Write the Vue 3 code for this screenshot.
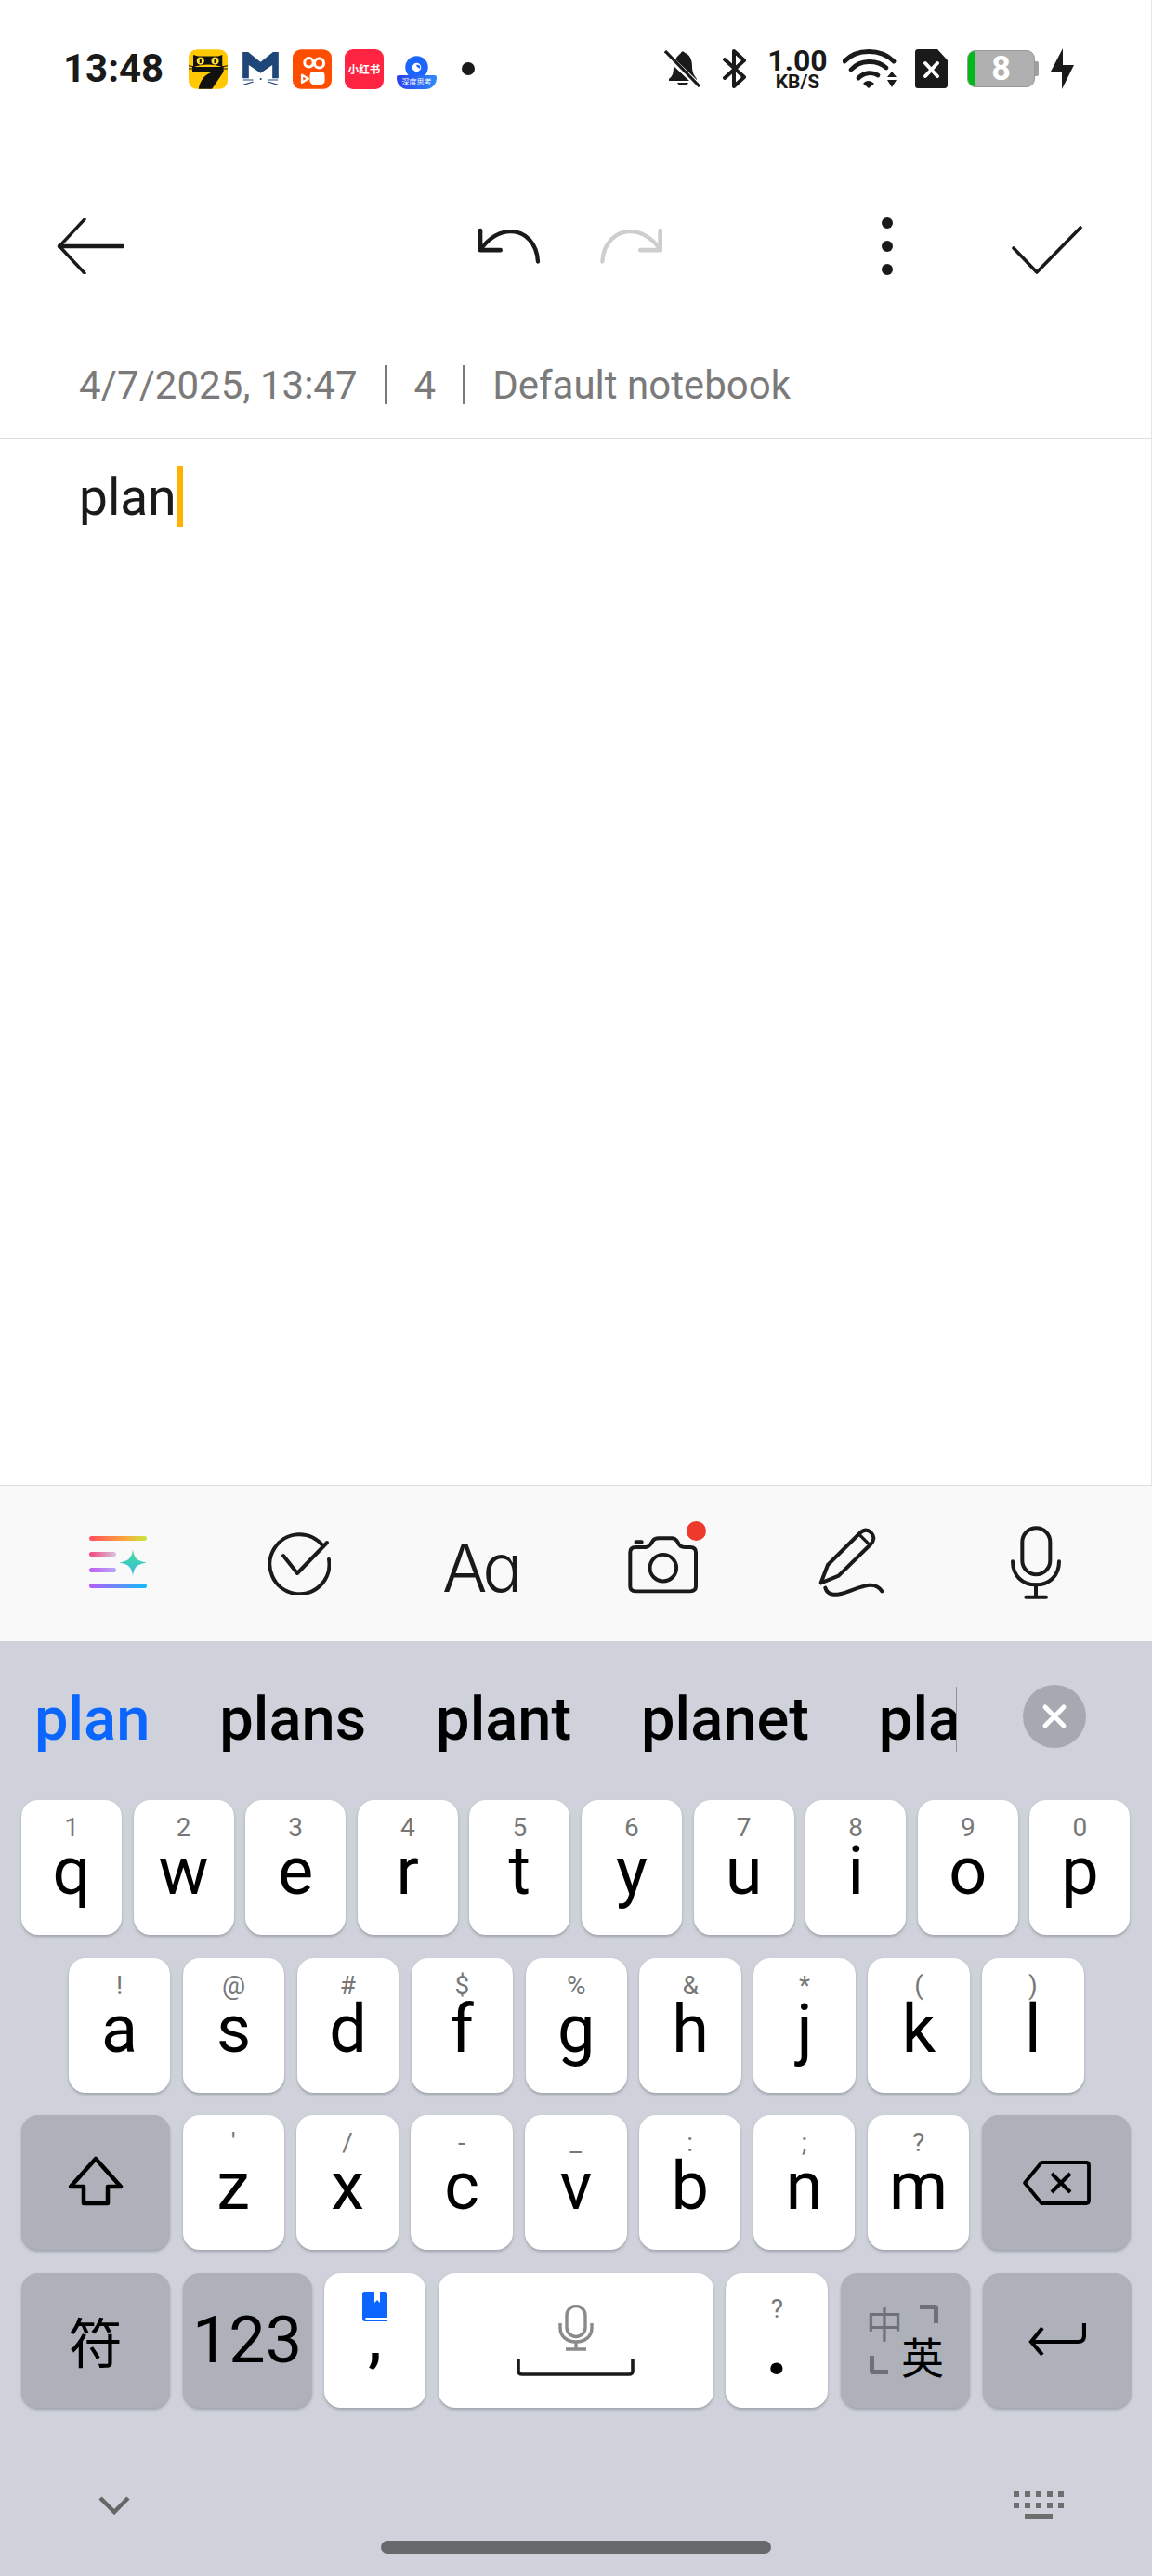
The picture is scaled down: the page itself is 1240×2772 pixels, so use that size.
<script setup>
// Keyboard rows: [letter, hint]
const row1 = [['q','1'],['w','2'],['e','3'],['r','4'],['t','5'],['y','6'],['u','7'],['i','8'],['o','9'],['p','0']]
const row2 = [['a','!'],['s','@'],['d','#'],['f','$'],['g','%'],['h','&'],['j','*'],['k','('],['l',')']]
const row3 = [['z',"'"],['x','/'],['c','-'],['v','_'],['b',':'],['n',';'],['m','?']]
const suggestions = ['plans', 'plant', 'planet', 'planning']
</script>

<template>
  <div class="phone">
    <div class="note">
      <!-- Status bar -->
      <div class="status">
        <span class="clock">13:48</span>
        <div class="apps">
          <svg class="app" width="42" height="43" viewBox="40 28 125 127">
            <rect x="40" y="28" width="125" height="127" rx="27" fill="#ffc800"/>
            <path d="M55 45L70 50H135L148 45V84C120 74 85 74 55 84Z" fill="#111"/>
            <circle cx="78" cy="65" r="12" fill="#ffe02e"/>
            <circle cx="125" cy="65" r="12" fill="#ffe02e"/>
            <path d="M78 58V72M125 58V72" stroke="#111" stroke-width="6"/>
            <path d="M40 80L62 84M165 80L143 84M40 90L60 90M165 90L145 90" stroke="#111" stroke-width="3"/>
            <path d="M52 84H152V100L115 155H72C76 130 90 110 112 102H52Z" fill="#111"/>
          </svg>
          <svg class="app mail" width="39" height="36" viewBox="212 40 116 108">
            <path d="M212 40H230L270 72L310 40H328V125H308V82L270 108L232 82V125H212Z" fill="#1f4678"/>
            <rect x="268" y="124" width="5" height="6" fill="#1f4678"/>
            <path d="M214 130L246 130M214 146L246 136M326 130L294 130M326 146L294 136" stroke="#1f4678" stroke-width="3.500"/>
          </svg>
          <svg class="app" width="42" height="43" viewBox="375 28 125 127">
            <rect x="375" y="28" width="125" height="127" rx="27" fill="#ff4d00"/>
            <circle cx="427" cy="70" r="14" fill="none" stroke="#fff" stroke-width="9"/>
            <circle cx="460" cy="72" r="15" fill="none" stroke="#fff" stroke-width="9"/>
            <path d="M405 110L425 122L405 134Z" fill="none" stroke="#fff" stroke-width="7" stroke-linejoin="round"/>
            <rect x="430" y="99" width="48" height="42" rx="13" fill="#fff"/>
          </svg>
          <div class="app red-app">小红书</div>
          <div class="app deep-app">
            <svg width="25" height="25" viewBox="0 0 25 25">
              <circle cx="12.500" cy="12.500" r="8.500" fill="none" stroke="#1a66ff" stroke-width="7.500"/>
              <path d="M12 10C15 9 17 11 16 14L13 12Z" fill="#1a66ff"/>
            </svg>
            <span class="deep-label">深度思考</span>
          </div>
        </div>
        <span class="dot"></span>

        <svg class="bell" width="40" height="40" viewBox="0 0 40 40">
          <path d="M5 31C9 28 10 25 10 17L27 33H5ZM12 10C14 6 17 4 18 3C18 1 22 1 22 3C27 4 30 10 30 17C30 24 32 27 35 31V32L12 10Z" fill="#1a1a1a"/>
          <path d="M14 35H26C25 39 15 39 14 35Z" fill="#1a1a1a"/>
          <path d="M1 1L38 39" stroke="#1a1a1a" stroke-width="3.200"/>
        </svg>
        <svg class="bt" width="25" height="42" viewBox="0 0 25 42">
          <path d="M2 11L23 30L12 40V2L23 12L2 31" fill="none" stroke="#1a1a1a" stroke-width="4" stroke-linejoin="round" stroke-linecap="round"/>
        </svg>
        <div class="speed">
          <span class="speed-num">1.00</span>
          <span class="speed-unit">KB/S</span>
        </div>
        <svg class="wifi" width="59" height="42" viewBox="0 0 59 42">
          <path d="M2 13C15 -1 41 -1 55 13" fill="none" stroke="#1a1a1a" stroke-width="4.800" stroke-linecap="round"/>
          <path d="M9 22C19 11 37 11 47 20" fill="none" stroke="#1a1a1a" stroke-width="4.800" stroke-linecap="round"/>
          <path d="M17 31C23 25 32 24 38 28" fill="none" stroke="#1a1a1a" stroke-width="4.800" stroke-linecap="round"/>
          <path d="M22 37C25 33 30 33 34 37L28 42Z" fill="#1a1a1a"/>
          <path d="M48 30L53 24L58 30ZM48 33L58 33L53 41Z" fill="#1a1a1a"/>
        </svg>
        <svg class="sim" width="35" height="42" viewBox="0 0 35 42">
          <path d="M3 0H24L35 12V39C35 41 33 42 32 42H3C1 42 0 41 0 39V3C0 1 1 0 3 0Z" fill="#1a1a1a"/>
          <path d="M11 15L24 29M24 15L11 29" stroke="#fff" stroke-width="4" stroke-linecap="round"/>
        </svg>
        <div class="battery">
          <div class="battery-body">
            <span class="battery-fill"></span>
            <span class="battery-num">8</span>
          </div>
          <span class="battery-nub"></span>
        </div>
        <svg class="bolt" width="25" height="44" viewBox="0 0 25 44">
          <path d="M13 0V18H25L12 44V25H0Z" fill="#1a1a1a"/>
        </svg>
      </div>

      <!-- Editor toolbar -->
      <div class="toolbar">
        <svg class="back" width="73" height="60" viewBox="0 0 73 60">
          <path d="M30 1L3 30L30 59" fill="none" stroke="#1a1a1a" stroke-width="3.400" stroke-linecap="round" stroke-linejoin="round"/>
          <path d="M3 30H71" stroke="#1a1a1a" stroke-width="4.600" stroke-linecap="round"/>
        </svg>
        <svg class="undo" width="70" height="42" viewBox="40 60 210 125">
          <path d="M52 72V135H117" fill="none" stroke="#1a1a1a" stroke-width="14" stroke-linecap="round" stroke-linejoin="round"/>
          <path d="M55 130C85 90 120 75 150 75C200 75 235 115 238 172" fill="none" stroke="#1a1a1a" stroke-width="13" stroke-linecap="round"/>
        </svg>
        <svg class="redo" width="70" height="42" viewBox="435 60 210 125">
          <path d="M632 72V135H568" fill="none" stroke="#cfcdcf" stroke-width="14" stroke-linecap="round" stroke-linejoin="round"/>
          <path d="M630 130C600 90 565 75 535 75C485 75 448 115 445 172" fill="none" stroke="#cfcdcf" stroke-width="13" stroke-linecap="round"/>
        </svg>
        <div class="kebab"><span></span><span></span><span></span></div>
        <svg class="done" width="76" height="52" viewBox="0 0 76 52">
          <path d="M2 24L27 50L74 2" fill="none" stroke="#1a1a1a" stroke-width="3.600" stroke-linecap="round" stroke-linejoin="round"/>
        </svg>
      </div>

      <!-- Note meta line -->
      <div class="meta">
        <span>4/7/2025, 13:47</span>
        <i class="sep"></i>
        <span>4</span>
        <i class="sep"></i>
        <span>Default notebook</span>
      </div>

      <div class="editor">
        <span class="typed">plan</span><i class="caret"></i>
      </div>
    </div>

    <!-- Formatting tools -->
    <div class="tools">
      <svg class="t-ai" width="62" height="56" viewBox="0 0 62 56">
        <defs>
          <linearGradient id="g1"><stop offset="0" stop-color="#ff4d5e"/><stop offset=".6" stop-color="#ffa53a"/><stop offset="1" stop-color="#c9e63a"/></linearGradient>
          <linearGradient id="g2"><stop offset="0" stop-color="#f2447f"/><stop offset="1" stop-color="#d6c4dc"/></linearGradient>
          <linearGradient id="g3"><stop offset="0" stop-color="#c05cf0"/><stop offset="1" stop-color="#b8a8f8"/></linearGradient>
          <linearGradient id="g4"><stop offset="0" stop-color="#b85cf8"/><stop offset="1" stop-color="#10bcf8"/></linearGradient>
          <linearGradient id="g5" x1="0" y1="0" x2="0" y2="1"><stop offset="0" stop-color="#4ee08c"/><stop offset="1" stop-color="#2cb8f0"/></linearGradient>
        </defs>
        <rect y="0" width="62" height="5" rx="2.500" fill="url(#g1)"/>
        <rect y="17" width="29" height="5" rx="2.500" fill="url(#g2)"/>
        <rect y="34" width="29" height="5" rx="2.500" fill="url(#g3)"/>
        <rect y="51" width="62" height="5" rx="2.500" fill="url(#g4)"/>
        <path d="M47 14C48 23 51 27 62 28.500C51 30 48 34 47 43C46 34 43 30 32 28.500C43 27 46 23 47 14Z" fill="url(#g5)"/>
      </svg>
      <svg class="t-check" width="68" height="68" viewBox="0 0 68 68">
        <path d="M60 16A32 32 0 1 0 66 30" fill="none" stroke="#1a1a1a" stroke-width="4" stroke-linecap="round"/>
        <path d="M17 26L32 45L64 12" fill="none" stroke="#1a1a1a" stroke-width="4" stroke-linecap="round" stroke-linejoin="round"/>
      </svg>
      <span class="t-aa">Aa</span>
      <div class="t-cam">
        <svg width="78" height="62" viewBox="645 70 235 185">
          <path d="M672 105H705C718 105 722 95 728 85C732 78 738 76 748 76H790C800 76 805 80 810 90C814 100 820 105 832 105H850C862 105 868 112 868 122V232C868 242 862 248 850 248H672C660 248 655 242 655 232V122C655 112 660 105 672 105Z" fill="none" stroke="#1a1a1a" stroke-width="12" stroke-linejoin="round"/>
          <circle cx="762" cy="172" r="43" fill="none" stroke="#1a1a1a" stroke-width="12"/>
          <rect x="668" y="82" width="30" height="13" rx="5" fill="#1a1a1a"/>
        </svg>
        <span class="badge"></span>
      </div>
      <svg class="t-pen" width="70" height="74" viewBox="60 40 210 222">
        <path d="M68 218L90 160L193 58C205 46 218 44 230 56C242 68 240 82 228 94L125 195Z" fill="none" stroke="#1a1a1a" stroke-width="12" stroke-linejoin="round"/>
        <path d="M192 62L222 92" stroke="#1a1a1a" stroke-width="10"/>
        <path d="M82 234C90 262 120 258 150 248C190 235 240 205 265 245" fill="none" stroke="#1a1a1a" stroke-width="12" stroke-linecap="round"/>
      </svg>
      <svg class="t-mic" width="55" height="80" viewBox="675 35 165 240">
        <rect x="715" y="42" width="90" height="150" rx="45" fill="none" stroke="#1a1a1a" stroke-width="12"/>
        <path d="M684 150C684 195 715 225 759 225C803 225 834 195 834 150" fill="none" stroke="#1a1a1a" stroke-width="12" stroke-linecap="round"/>
        <path d="M759 225V265M727 265H792" fill="none" stroke="#1a1a1a" stroke-width="12" stroke-linecap="round"/>
      </svg>
    </div>

    <!-- Keyboard -->
    <div class="keyboard">
      <div class="suggest">
        <div class="strip">
          <span class="word first">plan</span>
          <span v-for="w in suggestions" :key="w" class="word">{{ w }}</span>
        </div>
        <div class="close">
          <svg width="28" height="28" viewBox="0 0 28 28">
            <path d="M4 4L24 24M24 4L4 24" stroke="#fff" stroke-width="5" stroke-linecap="round"/>
          </svg>
        </div>
      </div>

      <div class="rows">
        <div class="row r1">
          <div v-for="k in row1" :key="k[0]" class="key">
            <span class="hint">{{ k[1] }}</span>
            <span class="letter">{{ k[0] }}</span>
          </div>
        </div>
        <div class="row r2">
          <div v-for="k in row2" :key="k[0]" class="key">
            <span class="hint">{{ k[1] }}</span>
            <span class="letter">{{ k[0] }}</span>
          </div>
        </div>
        <div class="row r3">
          <div class="key fn wide">
            <svg class="shift" width="60" height="54" viewBox="0 0 60 54">
              <path d="M30 3L57 33H43V51H17V33H3Z" fill="none" stroke="#000" stroke-width="4.500" stroke-linejoin="round"/>
            </svg>
          </div>
          <div v-for="k in row3" :key="k[0]" class="key">
            <span class="hint">{{ k[1] }}</span>
            <span class="letter">{{ k[0] }}</span>
          </div>
          <div class="key fn wide">
            <svg width="74" height="48" viewBox="0 0 74 48">
              <path d="M21 2H69C71 2 72 3 72 5V43C72 45 71 46 69 46H21L3 24Z" fill="none" stroke="#000" stroke-width="3.800" stroke-linejoin="round"/>
              <path d="M32 14L52 34M52 14L32 34" stroke="#000" stroke-width="4"/>
            </svg>
          </div>
        </div>
        <div class="row r4">
          <div class="key fn wide sym">符</div>
          <div class="key fn num">123</div>
          <div class="key comma">
            <svg width="27" height="32" viewBox="0 0 27 32">
              <path d="M2 0H13V12L16 9L19 12V0H25C26 0 27 1 27 2V28H4C3 28 3 30 4 30H27V32H3C1 32 0 31 0 29V2C0 1 1 0 2 0Z" fill="#0a66ff"/>
            </svg>
            <span class="letter comma-mark">,</span>
          </div>
          <div class="key space">
            <svg class="sp-mic" width="38" height="50" viewBox="0 0 38 50">
              <rect x="9" y="1.500" width="20" height="33" rx="10" fill="none" stroke="#8a8a8a" stroke-width="3.400"/>
              <path d="M2 20V25C2 34 9 40 19 40C29 40 36 34 36 25V20" fill="none" stroke="#8a8a8a" stroke-width="3.400"/>
              <path d="M19 40V48M8 48H30" stroke="#8a8a8a" stroke-width="3.400"/>
            </svg>
            <svg class="sp-bar" width="127" height="18" viewBox="0 0 127 18">
              <path d="M2 0V12C2 15 3 16 6 16H121C124 16 125 15 125 12V0" fill="none" stroke="#1a1a1a" stroke-width="3.600"/>
            </svg>
          </div>
          <div class="key period">
            <span class="hint">?</span>
            <span class="letter period-mark">.</span>
          </div>
          <div class="key fn lang">
            <span class="zh">中</span>
            <span class="en">英</span>
            <i class="corner tr"></i>
            <i class="corner bl"></i>
          </div>
          <div class="key fn wide">
            <svg width="62" height="36" viewBox="0 0 62 36">
              <path d="M60 0V13C60 18 58 20 53 20H3M15 5L3 20L15 34" fill="none" stroke="#000" stroke-width="4.200"/>
            </svg>
          </div>
        </div>
      </div>

      <div class="foot">
        <svg width="34" height="20" viewBox="0 0 34 20">
          <path d="M2 2L17 17L32 2" fill="none" stroke="#666" stroke-width="4.500"/>
        </svg>
        <svg width="54" height="30" viewBox="0 0 54 30" fill="#6e6e6e">
          <rect x="0" y="0" width="6" height="6"/><rect x="12" y="0" width="6" height="6"/><rect x="24" y="0" width="6" height="6"/><rect x="36" y="0" width="6" height="6"/><rect x="48" y="0" width="6" height="6"/>
          <rect x="0" y="12" width="6" height="6"/><rect x="12" y="12" width="6" height="6"/><rect x="24" y="12" width="6" height="6"/><rect x="36" y="12" width="6" height="6"/><rect x="48" y="12" width="6" height="6"/>
          <rect x="12" y="24" width="30" height="6"/>
        </svg>
      </div>
      <div class="home-bar"></div>
    </div>
  </div>
</template>

<style>
body {
  background: #fff;
}
</style>

<style scoped>
.phone {
  width: 1240px;
  height: 2772px;
  display: flex;
  flex-direction: column;
  overflow: hidden;
  font-family: Roboto, 'Noto Sans CJK SC', sans-serif;
  background: #fff;
}

.note {
  flex: 1;
  display: flex;
  flex-direction: column;
  border-right: 1px solid #e6e6e6;
}

/* status bar */
.status {
  height: 148px;
  display: flex;
  align-items: center;
  padding-left: 68px;
  color: #1a1a1a;
}
.clock {
  font-size: 42px;
  font-weight: 700;
  width: 135px;
  line-height: 42px;
}
.apps {
  display: flex;
  align-items: center;
  gap: 14px;
}
.app {
  flex: none;
}
.mail {
  margin: 0 1px 0 2px;
}
.red-app {
  width: 42px;
  height: 43px;
  border-radius: 9px;
  background: #ff2442;
  color: #fff;
  font-size: 11.500px;
  font-weight: 700;
  line-height: 44px;
  text-align: center;
  white-space: nowrap;
}
.deep-app {
  width: 43px;
  height: 43px;
  padding-top: 7px;
  box-sizing: border-box;
  display: flex;
  flex-direction: column;
  align-items: center;
}
.deep-app svg {
  flex: none;
}
.deep-label {
  flex: none;
  width: 43px;
  height: 15px;
  margin-top: -4px;
  position: relative;
  border-radius: 2px 2px 12px 12px;
  background: linear-gradient(90deg, #2a3ff0, #2f8cf7);
  color: #fff;
  font-size: 8px;
  line-height: 15px;
  text-align: center;
  white-space: nowrap;
}
.dot {
  width: 14px;
  height: 14px;
  border-radius: 50%;
  background: #1a1a1a;
  margin-left: 27px;
}
.bell {
  margin-left: 204px;
}
.bt {
  margin-left: 23px;
}
.speed {
  margin-left: 23px;
  width: 65px;
  display: flex;
  flex-direction: column;
  align-items: center;
  font-weight: 700;
}
.speed-num {
  font-size: 32px;
  line-height: 27px;
}
.speed-unit {
  font-size: 21px;
  line-height: 18px;
}
.wifi {
  margin-left: 16px;
}
.sim {
  margin-left: 19px;
}
.battery {
  margin-left: 21px;
  display: flex;
  align-items: center;
}
.battery-body {
  width: 73px;
  height: 40px;
  box-sizing: border-box;
  border: 1px solid #999;
  border-radius: 9px;
  background: #b0b0b0;
  display: flex;
  align-items: center;
  justify-content: center;
  overflow: hidden;
  position: relative;
}
.battery-fill {
  position: absolute;
  left: 0;
  top: 0;
  bottom: 0;
  width: 7px;
  background: #00b81c;
}
.battery-num {
  color: #fff;
  font-size: 36px;
  font-weight: 700;
  line-height: 40px;
}
.battery-nub {
  width: 4px;
  height: 16px;
  border-radius: 0 2px 2px 0;
  background: #a0a0a0;
}
.bolt {
  margin-left: 13px;
}

/* editor toolbar */
.toolbar {
  height: 234px;
  display: flex;
  align-items: center;
  padding-left: 61px;
}
.undo {
  margin-left: 379px;
}
.redo {
  margin-left: 62px;
}
.kebab {
  margin-left: 234px;
  height: 62px;
  display: flex;
  flex-direction: column;
  justify-content: space-between;
}
.kebab span {
  width: 12px;
  height: 12px;
  border-radius: 50%;
  background: #1a1a1a;
}
.done {
  margin-left: 128px;
  margin-top: 8px;
}

/* meta */
.meta {
  height: 90px;
  box-sizing: border-box;
  border-bottom: 1px solid #dedede;
  padding-left: 85px;
  padding-bottom: 25px;
  display: flex;
  align-items: center;
  gap: 29px;
  color: #7a7a7a;
  font-size: 42px;
}
.sep {
  width: 3px;
  height: 42px;
  background: #7a7a7a;
}

.editor {
  flex: 1;
  padding: 29px 0 0 85px;
  display: flex;
  align-items: flex-start;
  color: #1a1a1a;
  font-size: 55px;
}
.typed {
  line-height: 68px;
}
.caret {
  width: 7px;
  height: 66px;
  background: #ffb300;
}

/* tools */
.tools {
  height: 168px;
  box-sizing: border-box;
  border-top: 1px solid #dedede;
  background: #f9f9f9;
  display: flex;
  align-items: flex-start;
  padding-left: 96px;
  color: #1a1a1a;
}
.t-ai {
  margin-top: 54px;
}
.t-check {
  margin-top: 49px;
  margin-left: 130px;
}
.t-aa {
  width: 80px;
  margin-left: 120px;
  margin-top: 43px;
  font-family: Inter, Roboto, sans-serif;
  font-feature-settings: 'cv11';
  font-size: 72px;
  font-weight: 300;
  line-height: 90px;
  letter-spacing: -5px;
}
.t-cam {
  margin-left: 119px;
  margin-top: 54px;
  position: relative;
  height: 62px;
}
.badge {
  position: absolute;
  top: -16px;
  left: 64px;
  width: 21px;
  height: 21px;
  border-radius: 50%;
  background: #ee3a2c;
}
.t-pen {
  margin-left: 128px;
  margin-top: 45px;
}
.t-mic {
  margin-left: 136px;
  margin-top: 43px;
}

/* keyboard */
.keyboard {
  height: 1006px;
  background: #cfd2da;
}
.suggest {
  height: 171px;
  display: flex;
  align-items: flex-start;
}
.strip {
  width: 1030px;
  box-sizing: border-box;
  height: 70px;
  margin-top: 49px;
  border-right: 1px solid #8f9299;
  padding-left: 37px;
  display: flex;
  gap: 75px;
  overflow: hidden;
  color: #000;
  font-size: 65px;
  font-weight: 500;
  line-height: 70px;
  white-space: nowrap;
}
.word {
  flex: none;
}
.word.first {
  color: #0a66ff;
}
.close {
  width: 68px;
  height: 68px;
  margin: 47px 0 0 71px;
  border-radius: 50%;
  background: #a6a9af;
  display: flex;
  align-items: center;
  justify-content: center;
}

.rows {
  display: flex;
  flex-direction: column;
  gap: 24.500px;
}
.row {
  height: 145px;
  display: flex;
}
.r1 {
  padding-left: 23px;
  gap: 12.600px;
}
.r1 .key {
  width: 108px;
}
.r2 {
  padding-left: 74px;
  gap: 13.500px;
}
.r3,
.r4 {
  padding-left: 22.500px;
  gap: 13.500px;
}
.key {
  width: 109.400px;
  height: 145px;
  flex: none;
  border-radius: 18px;
  background: #fff;
  box-shadow: 0 2px 3px rgba(70, 75, 90, 0.35);
  color: #000;
  display: flex;
  flex-direction: column;
  align-items: center;
  box-sizing: border-box;
  padding-top: 16px;
}
.hint {
  height: 28px;
  font-size: 28px;
  line-height: 28px;
  color: #777;
}
.letter {
  font-size: 72px;
  line-height: 72px;
  height: 72px;
  margin-top: -3px;
}

.fn {
  background: #aeb1ba;
  justify-content: center;
  padding-top: 0;
}
.wide {
  width: 160.500px;
}
.shift {
  margin-top: -4px;
}
.sym {
  font-size: 58px;
  font-family: 'Noto Sans CJK SC', sans-serif;
}
.num {
  width: 139px;
  font-size: 70px;
}
.comma {
  padding-top: 20px;
}
.comma-mark {
  font-size: 62px;
  font-weight: 700;
  margin-top: -15.500px;
}
.space {
  width: 296px;
  padding-top: 34px;
}
.sp-bar {
  margin-top: 9px;
}
.period {
  width: 110px;
  padding-top: 25px;
}
.period-mark {
  font-size: 96px;
  line-height: 96px;
  height: 96px;
  margin-top: -26px;
  font-weight: 500;
}
.lang {
  width: 139.500px;
  position: relative;
}
.zh {
  position: absolute;
  left: 27px;
  top: 29px;
  font-size: 40px;
  line-height: 48px;
  color: #6f7178;
  font-family: 'Noto Sans CJK SC', sans-serif;
}
.en {
  position: absolute;
  left: 65px;
  top: 60px;
  font-size: 46px;
  line-height: 56px;
  font-family: 'Noto Sans CJK SC', sans-serif;
}
.corner {
  position: absolute;
  width: 15px;
  height: 15px;
  border: 0 solid #6f7178;
}
.tr {
  left: 85px;
  top: 34px;
  border-width: 5px 5px 0 0;
  border-top-right-radius: 4px;
}
.bl {
  left: 31px;
  top: 89px;
  border-width: 0 0 5px 5px;
  border-bottom-left-radius: 4px;
}

.foot {
  margin-top: 90px;
  height: 30px;
  display: flex;
  align-items: center;
  justify-content: space-between;
  padding: 0 95px 0 106px;
}
.home-bar {
  width: 420px;
  height: 14px;
  margin: 23px auto 0;
  border-radius: 7px;
  background: #68696d;
}
</style>
